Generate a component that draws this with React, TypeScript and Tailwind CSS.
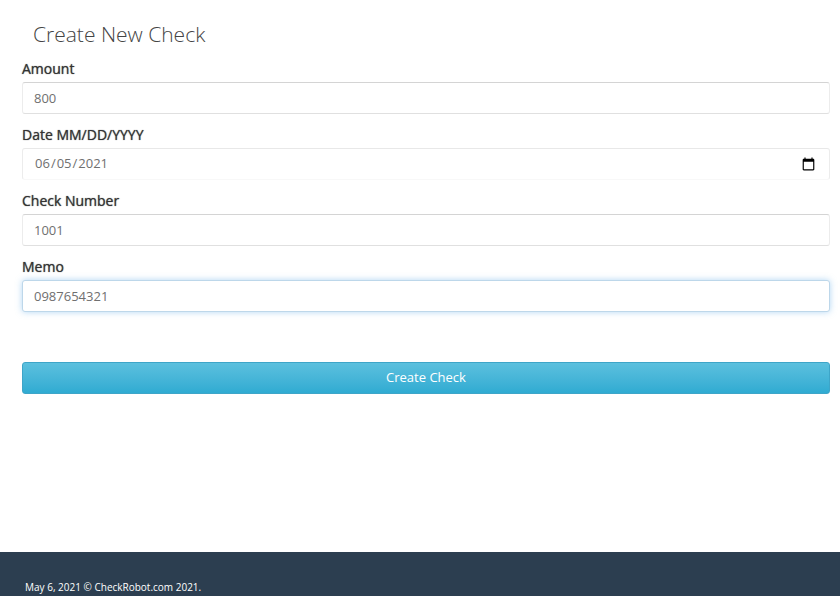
import { useState } from 'react';

interface FieldProps {
  id: string;
  label: string;
  value: string;
  onChange: (value: string) => void;
  type?: string;
  inputClass?: string;
}

function Field({
  id,
  label,
  value,
  onChange,
  type = 'text',
  inputClass = 'border-x-[#ececec] border-t-[#d4d4d4] border-b-[#e0e0e0]',
}: FieldProps) {
  return (
    <div>
      <label
        htmlFor={id}
        className="mb-[3px] block text-sm leading-5 font-medium text-[#333333] [text-shadow:0_0_1px_#555555]"
      >
        {label}
      </label>
      <input
        id={id}
        type={type}
        value={value}
        onChange={(e) => onChange(e.target.value)}
        className={`block h-8 w-full rounded-[3px] border bg-white px-[11px] text-[13px] text-[#707070] outline-none ${inputClass}`}
      />
    </div>
  );
}

export default function App() {
  const [amount, setAmount] = useState('800');
  const [date, setDate] = useState('2021-06-05');
  const [checkNumber, setCheckNumber] = useState('1001');
  const [memo, setMemo] = useState('0987654321');

  return (
    <div className="flex min-h-screen flex-col bg-white font-['Open_Sans',sans-serif]">
      <main className="pt-5 pr-[10px] pb-10 pl-[22px]">
        <h1 className="mb-[11px] pl-[11px] text-[21px] leading-7 font-light text-[#444444]">Create New Check</h1>
        <form onSubmit={(e) => e.preventDefault()}>
          <div className="flex flex-col gap-[11px]">
            <Field id="amount" label="Amount" value={amount} onChange={setAmount} />
            <Field
              id="date"
              label="Date MM/DD/YYYY"
              type="date"
              value={date}
              onChange={setDate}
              inputClass="border-x-[#ececec] border-t-[#e8e8e8] border-b-[#f8f8f8] [&::-webkit-calendar-picker-indicator]:size-[15px]"
            />
            <Field id="check-number" label="Check Number" value={checkNumber} onChange={setCheckNumber} />
            <Field
              id="memo"
              label="Memo"
              value={memo}
              onChange={setMemo}
              inputClass="border-[#bdd7ea] shadow-[0_0_6px_rgba(102,175,233,0.5)]"
            />
          </div>
          <button
            type="submit"
            className="mt-[50px] block h-8 w-full rounded-[3px] border border-[#3ea5c8] bg-linear-to-b from-[#5bc0de] to-[#2fabd2] text-[13px] text-white"
          >
            Create Check
          </button>
        </form>
      </main>
      <footer className="mt-auto bg-[#2c3e50] px-[25px] pt-[27px] pb-px text-[10px] leading-4 text-white">
        May 6, 2021 © CheckRobot.com 2021.
      </footer>
    </div>
  );
}
